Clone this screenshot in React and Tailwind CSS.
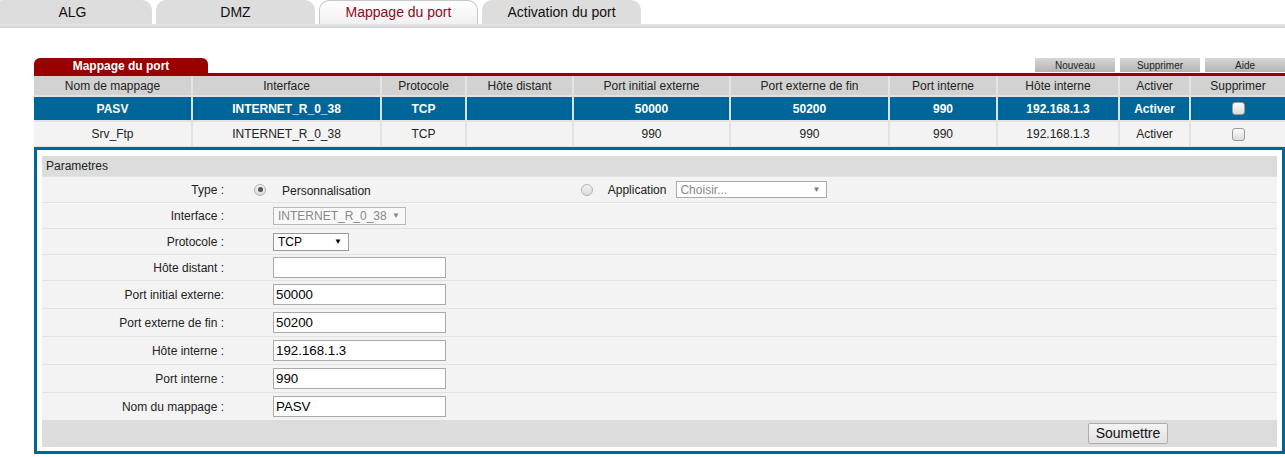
import React from "react";

const cols = [157, 189, 85, 107, 157, 159, 108, 122, 71, 96];
const heads = ["Nom de mappage", "Interface", "Protocole", "Hôte distant", "Port initial externe", "Port externe de fin", "Port interne", "Hôte interne", "Activer", "Supprimer"];
const rows = [
  ["PASV", "INTERNET_R_0_38", "TCP", "", "50000", "50200", "990", "192.168.1.3", "Activer"],
  ["Srv_Ftp", "INTERNET_R_0_38", "TCP", "", "990", "990", "990", "192.168.1.3", "Activer"],
];

function Tab({ label, active, first }) {
  return (
    <div
      className={
        "w-[159px] h-[24px] flex items-center justify-center rounded-t-[10px] text-[14px] " +
        (first ? "-ml-[7px] " : "") +
        (active
          ? "bg-gradient-to-b from-[#ffffff] to-[#f0f0f0] border border-b-0 border-[#c8c8c8] text-[#8e0b1b]"
          : "bg-[#dddddd] text-[#111]")
      }
    >
      {label}
    </div>
  );
}

function Checkbox() {
  return <span className="inline-block w-[13px] h-[13px] rounded-[3px] border border-[#9a9a9a] bg-gradient-to-b from-[#fbfbfb] to-[#dcdcdc]" />;
}

function Radio({ checked }) {
  return (
    <span className="w-[12px] h-[12px] rounded-full border border-[#b5b5b5] bg-gradient-to-b from-[#f4f4f4] to-[#dadada] flex items-center justify-center">
      {checked && <span className="w-[5px] h-[5px] rounded-full bg-[#555]" />}
    </span>
  );
}

function Row({ label, h = "h-[28px]", children }) {
  return (
    <div className={"flex items-center border-t border-[#e2e2e2] bg-[#f3f3f3] " + h}>
      <div className="w-[182px] text-right text-[12px] text-[#222]">{label}</div>
      {children}
    </div>
  );
}

function Field({ value }) {
  return (
    <div className="ml-[49px] w-[173px] h-[21px] border border-[#a9a9a9] bg-white flex items-center pl-[2px] text-[13.3px] text-black">
      {value}
    </div>
  );
}

export default function App() {
  return (
    <div className="w-[1285px] h-[457px] bg-white overflow-hidden font-['Liberation_Sans',Arial,sans-serif]">
      <div className="flex gap-[4px]">
        <Tab label="ALG" first />
        <Tab label="DMZ" />
        <Tab label="Mappage du port" active />
        <Tab label="Activation du port" />
      </div>
      <div className="h-[4px] bg-gradient-to-b from-[#e8e8e8] to-[#d2d2d2]" />

      <div className="ml-[34px] mt-[30px]">
        <div className="flex items-end justify-between h-[15px]">
          <div className="w-[174px] h-[15px] rounded-t-[6px] bg-[#990000] text-white font-bold text-[12px] flex items-center justify-center pt-[1px]">
            Mappage du port
          </div>
          <div className="flex gap-[5px] pb-[1px]">
            {["Nouveau", "Supprimer", "Aide"].map((b) => (
              <div key={b} className="w-[80px] h-[14px] bg-gradient-to-b from-[#d6d6d6] to-[#b4b4b4] text-[10px] text-[#222] flex items-center justify-center">
                {b}
              </div>
            ))}
          </div>
        </div>
        <div className="h-[3px] bg-[#990000]" />

        <div className="flex h-[19px] bg-[#d2d2d2] text-[12px] text-[#222]">
          {heads.map((t, i) => (
            <div key={t} style={{ width: cols[i] }} className={"flex items-center justify-center " + (i ? "border-l-2 border-[#e4e4e4]" : "")}>
              {t}
            </div>
          ))}
        </div>
        {rows.map((r, ri) => (
          <div
            key={ri}
            className={
              "flex text-[12px] border-t-2 border-[#e2e2e2] " +
              (ri === 0 ? "h-[25px] bg-[#006699] text-white font-bold" : "h-[26px] bg-[#f3f3f3] text-[#222]")
            }
          >
            {cols.map((w, i) => (
              <div key={i} style={{ width: w }} className={"flex items-center justify-center " + (i ? "border-l-2 " + (ri === 0 ? "border-[#d8e4ec]" : "border-[#e2e2e2]") : "")}>
                {i < 9 ? r[i] : <Checkbox />}
              </div>
            ))}
          </div>
        ))}
        <div className="h-[1px] bg-[#e2e2e2]" />

        <div className="border-[3px] border-[#006699] px-[5px] pt-[6px] pb-[4px]">
          <div className="h-[20px] bg-[#dcdcdc] flex items-center pl-[4px] text-[12px] text-[#222]">Parametres</div>

          <Row label="Type :" h="h-[26px]">
            <div className="ml-[30px]"><Radio checked /></div>
            <span className="ml-[16px] text-[12px] text-[#222] pt-[3px]">Personnalisation</span>
            <div className="ml-[210px]"><Radio /></div>
            <span className="ml-[15px] text-[12px] text-[#222]">Application</span>
            <div className="ml-[10px] w-[151px] h-[17px] border border-[#a9a9a9] bg-white flex items-center justify-between pl-[3px] pr-[6px] text-[12px] text-[#888]">
              <span>Choisir...</span>
              <span className="text-[8px] text-[#777]">▼</span>
            </div>
          </Row>
          <Row label="Interface :" h="h-[26px]">
            <div className="ml-[49px] w-[133px] h-[18px] border border-[#b8b8b8] bg-[#f8f8f8] flex items-center justify-between pl-[4px] pr-[5px] text-[12px] text-[#888]">
              <span>INTERNET_R_0_38</span>
              <span className="text-[8px]">▼</span>
            </div>
          </Row>
          <Row label="Protocole :" h="h-[26px]">
            <div className="ml-[49px] w-[76px] h-[18px] border border-[#9a9a9a] bg-white flex items-center justify-between pl-[4px] pr-[6px] text-[12px] text-black">
              <span>TCP</span>
              <span className="text-[8px]">▼</span>
            </div>
          </Row>
          <Row label="Hôte distant :" h="h-[26px]">
            <Field value="" />
          </Row>
          <Row label="Port initial externe:"><Field value="50000" /></Row>
          <Row label="Port externe de fin :"><Field value="50200" /></Row>
          <Row label="Hôte interne :"><Field value="192.168.1.3" /></Row>
          <Row label="Port interne :"><Field value="990" /></Row>
          <Row label="Nom du mappage :"><Field value="PASV" /></Row>

          <div className="h-[27px] bg-[#dcdcdc] flex items-center justify-end pr-[109px]">
            <div className="w-[80px] h-[21px] border border-[#adadad] rounded-[2px] bg-gradient-to-b from-[#f4f4f4] to-[#e2e2e2] flex items-center justify-center text-[14px] text-[#111]">
              Soumettre
            </div>
          </div>
        </div>
      </div>
    </div>
  );
}
